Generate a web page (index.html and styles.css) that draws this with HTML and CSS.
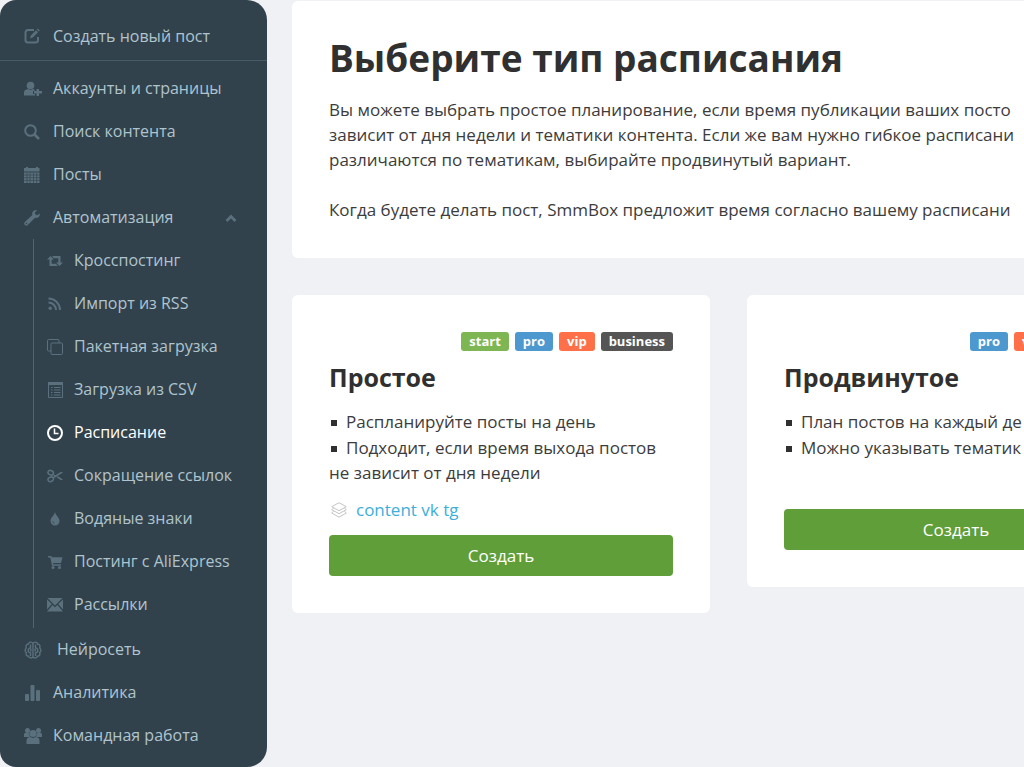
FILE: index.html
```html
<!DOCTYPE html>
<html lang="ru">
<head>
<meta charset="utf-8">
<title>Расписание</title>
<link rel="stylesheet" href="styles.css">
</head>
<body>
<div class="app">
<aside class="sidebar">
  <nav aria-label="Главное меню">
    <a class="item create" href="#"><svg class="icon" viewBox="0 0 16 16"><path d="M10 2H4a2.500 2.500 0 0 0-2.500 2.500V12A2.500 2.500 0 0 0 4 14.500h7.500A2.500 2.500 0 0 0 14 12V9" fill="none" stroke="currentColor" stroke-width="2"/><path d="M6 10.500 6.800 7.500 12 2.300l2 2L8.800 9.600zM12.800 1.500l1-1 2 2-1 1z"/></svg>Создать новый пост</a>
    <div class="menu">
      <a class="item" href="#"><svg class="icon" viewBox="0 0 16 16"><circle cx="6.500" cy="4.500" r="3.800"/><path d="M0 14.500v-3C0 9 2 8.500 4 8l2.500 1L9 8l1.500.6V10H9v3h2v1.500zM12.500 8H15v2h3v2.500h-3V15h-2.500v-2.500H10V10h2.500z"/></svg>Аккаунты и страницы</a>
      <a class="item" href="#"><svg class="icon" viewBox="0 0 16 16"><g fill="none" stroke="currentColor"><circle cx="6.500" cy="6.500" r="5.300" stroke-width="2"/><path d="m10.500 10.500 4.500 4.500" stroke-width="2.600"/></g></svg>Поиск контента</a>
      <a class="item" href="#"><svg class="icon" viewBox="0 0 16 16"><path d="M0 1h2V0h2v1h8V0h2v1h1.500v3.500H0zM0 5.500h15.500V16H0z"/><path class="cut" d="M0 8h16M0 10.700h16M0 13.400h16M3 6v10M6 6v10M9.500 6v10M12.700 6v10"/></svg>Посты</a>
      <a class="item" href="#" aria-expanded="true"><svg class="icon" viewBox="0 0 16 16"><path d="M15.700 3.500 13 5.200 11 4.100V2.300L13.300.6C10.600-.5 7.500 1.300 8.300 5L.8 12a2 2 0 0 0 3 3l7.300-7.200c3 .7 5.200-1.600 4.600-4.300zM2.400 14.200a.7.700 0 1 1 .1-1.400.7.700 0 0 1-.1 1.400z"/></svg>Автоматизация<svg class="chevron" viewBox="0 0 12 8"><path d="m1.500 7 4.500-4.500 4.500 4.500" fill="none" stroke="currentColor" stroke-width="2.800"/></svg></a>
      <div class="submenu">
        <a class="item" href="#"><svg class="icon" viewBox="0 0 16 16"><path d="M3.500 3 7 6.500H4.700v4.300H9l1.800 2.200H2.500V6.500H0zM5 3h8.500v6.500H16L12.500 13 9 9.500h2.300V5.200H6.800z"/></svg>Кросспостинг</a>
        <a class="item" href="#"><svg class="icon" viewBox="0 0 16 16"><circle cx="3.200" cy="12.300" r="1.700"/><path d="M1.500 6.500A7.500 7.500 0 0 1 9 14M1.500 2.500A11.500 11.500 0 0 1 13 14" fill="none" stroke="currentColor" stroke-width="2"/></svg>Импорт из RSS</a>
        <a class="item" href="#"><svg class="icon" viewBox="0 0 16 16"><g fill="none" stroke="currentColor"><rect x="4" y="4" width="11.500" height="11.500" rx="1"/><path d="M4 12H1.500a1 1 0 0 1-1-1V1.500a1 1 0 0 1 1-1H11a1 1 0 0 1 1 1V4"/></g></svg>Пакетная загрузка</a>
        <a class="item" href="#"><svg class="icon" viewBox="0 0 16 16"><path d="M1 0h15v3H1z"/><path d="M1.500 2v13.500h14V2M4 5.500h1.500M7 5.500h6.500M4 8h1.500M7 8h6.500M4 10.500h1.500M7 10.500h6.500M4 13h1.500M7 13h6.500" fill="none" stroke="currentColor"/></svg>Загрузка из CSV</a>
        <a class="item active" href="#" aria-current="page"><svg class="icon" viewBox="0 0 16 16"><g fill="none" stroke="currentColor"><circle cx="8" cy="8" r="7" stroke-width="2"/><path d="M7.500 3.500v5h4" stroke-width="1.500"/></g></svg>Расписание</a>
        <a class="item" href="#"><svg class="icon" viewBox="0 0 16 16"><g fill="none" stroke="currentColor" stroke-width="1.500"><ellipse cx="3.700" cy="4.700" rx="2.800" ry="2.200" transform="rotate(25 3.700 4.700)"/><ellipse cx="3.700" cy="11.300" rx="2.800" ry="2.200" transform="rotate(-25 3.700 11.300)"/></g><path d="m5.500 6 3 1.200L14 3.800l2 .7L6.500 10.500l-1-.8L7.500 8 5 7zM9.500 9.300l1.500-1 5 3.200-2 .7z"/></svg>Сокращение ссылок</a>
        <a class="item" href="#"><svg class="icon" viewBox="0 0 16 16"><path d="M8 1C7.300 4.500 3.500 6.500 3.500 10a4.500 4.500 0 0 0 9 0C12.500 6.500 8.700 4.500 8 1z"/><path class="cut" d="M5.500 10a2.500 2.500 0 0 0 2 2.300"/></svg>Водяные знаки</a>
        <a class="item" href="#"><svg class="icon" viewBox="0 0 16 16"><path d="M1 2h3.300l.5 1.300H15.500L14 9H6l.3 1.300H14v1.400H5L3.300 3.400H1z"/><circle cx="6" cy="13.500" r="1.500"/><circle cx="12.500" cy="13.500" r="1.500"/></svg>Постинг с AliExpress</a>
        <a class="item" href="#"><svg class="icon" viewBox="0 0 16 16"><path d="M.5 1h15L8 8.500zM0 2.500 4.800 7 0 12.500zM16 2.500 11.200 7l4.800 5.500zM5.600 7.900 8 10.200l2.400-2.300L16 14.500H0z"/></svg>Рассылки</a>
      </div>
      <a class="item wide" href="#"><svg class="icon" viewBox="0 0 18 18"><g fill="none" stroke="currentColor" stroke-width="1.400"><path d="M9 2.500C7.500.3 4.700 1 4.500 3 2 3.300 1.500 5.500 2.300 7 .7 8 .7 10.500 2.300 11.500 1.500 13.500 2.500 15 4.500 15.200 5.200 17.300 8 17.500 9 15.800 10 17.500 12.800 17.300 13.500 15.200c2-.2 3-1.700 2.200-3.700 1.600-1 1.600-3.500 0-4.500.8-1.500.3-3.700-2.200-4C13.300 1 10.500.3 9 2.500zM9 2.500v13.300"/><path d="M6.500 3.500v3L4.300 8.300v2.500L6.500 12v3M11.500 3.500v3l2.200 1.800v2.500L11.500 12v3M6.800 7.500v3M11.200 7.500v3"/></g></svg>Нейросеть</a>
      <a class="item" href="#"><svg class="icon" viewBox="0 0 16 16"><rect x="1" y="9" width="4" height="7" rx="1"/><rect x="6.500" y="0" width="4" height="16" rx="1"/><rect x="12" y="5" width="4" height="11" rx="1"/></svg>Аналитика</a>
      <a class="item" href="#"><svg class="icon people" viewBox="0 0 18 16"><circle cx="9" cy="5.500" r="3.600"/><circle cx="3.500" cy="2.500" r="2.500"/><circle cx="14.500" cy="2.500" r="2.500"/><path d="M0 9V6.500C0 5 1.500 4.700 2.700 4.800L5 5.300 6 9H4zM18 9V6.500c0-1.500-1.500-1.800-2.700-1.700L13 5.300 12 9h2zM2.500 16v-3.500c0-2 1.500-3.500 3.800-3.500L9 10l2.700-1c2.300 0 3.800 1.500 3.800 3.500V16z"/></svg>Командная работа</a>
    </div>
  </nav>
</aside>
<main class="content">
  <section class="card intro">
    <h1>Выберите тип расписания</h1>
    <p>Вы можете выбрать простое планирование, если время публикации ваших посто<br>зависит от дня недели и тематики контента. Если же вам нужно гибкое расписани<br>различаются по тематикам, выбирайте продвинутый вариант.</p>
    <p>Когда будете делать пост, SmmBox предложит время согласно вашему расписани</p>
  </section>
  <div class="plans">
    <section class="card plan">
      <div class="badges"><span class="badge start">start</span><span class="badge pro">pro</span><span class="badge vip">vip</span><span class="badge business">business</span></div>
      <h2>Простое</h2>
      <ul>
        <li>Распланируйте посты на день</li>
        <li>Подходит, если время выхода постов не зависит от дня недели</li>
      </ul>
      <a class="group" href="#"><svg class="layers" viewBox="0 0 16 16"><path d="m8 .7 7.300 4L8 8.700.7 4.700zM2.700 6 .7 7.700l7.300 4 7.300-4-2-1.700M2.700 9.200.7 11 8 15.200l7.300-4.200-2-1.800"/></svg>content vk tg</a>
      <button class="button" type="button">Создать</button>
    </section>
    <section class="card plan">
      <div class="badges"><span class="badge pro">pro</span><span class="badge vip">vip</span><span class="badge business">business</span></div>
      <h2>Продвинутое</h2>
      <ul>
        <li>План постов на каждый де</li>
        <li>Можно указывать тематик</li>
      </ul>
      <button class="button" type="button">Создать</button>
    </section>
  </div>
</main>
</div>
</body>
</html>
```
FILE: styles.css
```css
* { box-sizing: border-box; }

body {
  margin: 0;
  background: #f0f1f5;
  color: #3c3c3c;
  font: 17px/25px "Open Sans", "Noto Sans", sans-serif;
}

.app {
  display: flex;
  align-items: flex-start;
  gap: 25px;
  min-height: 100vh;
  overflow: hidden;
}

/* Sidebar */
.sidebar {
  flex: 0 0 267px;
  padding: 12px 0 10px;
  border-radius: 16px 20px 20px 16px;
  background: #31424c;
  font-size: 16px;
}

.item {
  display: flex;
  align-items: center;
  gap: 13px;
  height: 43px;
  padding: 0 30px 0 24px;
  color: #b0c4ce;
  text-decoration: none;
  white-space: nowrap;
}

.create {
  height: 49px;
  border-bottom: 1px solid #465c67;
}

.menu { padding-top: 6px; }

.icon {
  flex: none;
  width: 16px;
  height: 16px;
  overflow: visible;
  color: #5a707c;
  fill: currentColor;
}

.cut {
  fill: none;
  stroke: #31424c;
  stroke-width: 0.6;
}

.people { width: 18px; margin-right: -2px; }
.wide { gap: 15px; }
.wide .icon { width: 18px; height: 18px; }

.chevron {
  width: 12px;
  height: 8px;
  margin-left: auto;
  color: #5a707c;
}

.submenu {
  margin-left: 33px;
  padding-bottom: 2px;
  border-left: 1px solid #52666f;
}

.submenu .item {
  gap: 11px;
  padding-left: 13px;
}

.active, .submenu .active, .active .icon { color: #fff; }

/* Content */
.content {
  display: flex;
  flex: 1;
  flex-direction: column;
  gap: 37px;
  min-width: 873px;
  padding-top: 1px;
}

.card {
  border-radius: 6px;
  background: #fff;
  padding: 37px;
}

.intro {
  white-space: nowrap;
  padding-top: 30px;
  padding-bottom: 36px;
}

h1, h2 {
  margin: 0;
  color: #303030;
  font-weight: 700;
}

h1 {
  margin-bottom: 12px;
  font-size: 37px;
  line-height: 54px;
}

p { margin: 0 0 25px; }
p:last-child { margin-bottom: 0; }

.plans {
  display: grid;
  grid-template-columns: 1fr 1fr;
  align-items: start;
  gap: 37px;
}

.plan {
  display: flex;
  flex-direction: column;
}

.badges {
  display: flex;
  justify-content: flex-end;
  gap: 6px;
}

.badge {
  padding: 0 8px;
  border-radius: 3px;
  color: #fff;
  font-size: 13px;
  font-weight: 700;
  line-height: 19px;
}

.start { background: #7db652; }
.pro { background: #4c98cf; }
.vip { background: #ff7048; }
.business { background: #555; }

h2 {
  margin: 10px 0 16px;
  font-size: 25px;
  line-height: 32px;
}

ul {
  min-height: 77px;
  margin: 0 0 11px;
  padding: 0;
  list-style: none;
}

li { margin-bottom: 1px; }

li::before {
  display: inline-block;
  width: 6px;
  height: 6px;
  margin: 0 9px 2px 2px;
  background: #303030;
  content: "";
}

.group {
  display: flex;
  align-items: center;
  gap: 9px;
  margin-bottom: 1px;
  padding-left: 2px;
  color: #3daed9;
  text-decoration: none;
}

.layers {
  width: 16px;
  height: 16px;
  fill: none;
  stroke: #c4c4c4;
}

.button {
  height: 41px;
  margin-top: 12px;
  border: 0;
  border-radius: 4px;
  background: #5f9e38;
  color: #fff;
  font: inherit;
}
```
